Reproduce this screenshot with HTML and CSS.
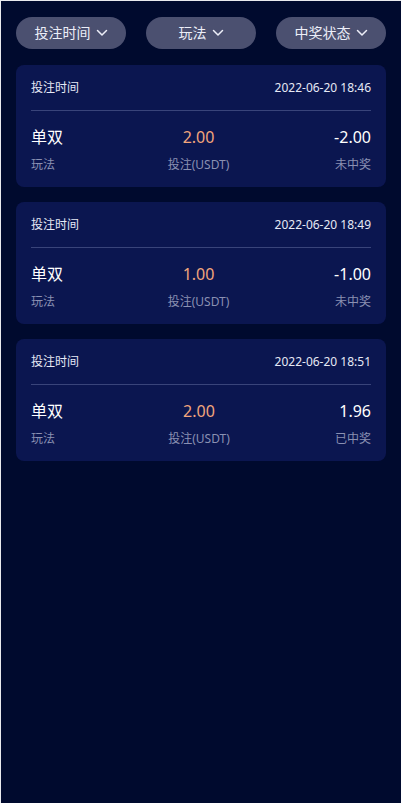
FILE: index.html
```html
<!DOCTYPE html>
<html lang="zh-CN">
<head>
<meta charset="utf-8">
<title>投注记录</title>
<link rel="stylesheet" href="styles.css">
</head>
<body>
<div class="page">
  <div class="filters">
    <button class="filter">投注时间<svg class="chev" viewBox="0 0 12 8"><path d="M1.5 1.5 L6 6 L10.5 1.5"/></svg></button>
    <button class="filter">玩法<svg class="chev" viewBox="0 0 12 8"><path d="M1.5 1.5 L6 6 L10.5 1.5"/></svg></button>
    <button class="filter">中奖状态<svg class="chev" viewBox="0 0 12 8"><path d="M1.5 1.5 L6 6 L10.5 1.5"/></svg></button>
  </div>

  <div class="card">
    <div class="card-head"><span>投注时间</span><span>2022-06-20 18:46</span></div>
    <div class="card-body">
      <div class="col left"><div class="val">单双</div><div class="lbl">玩法</div></div>
      <div class="col mid"><div class="val amount">2.00</div><div class="lbl">投注(USDT)</div></div>
      <div class="col right"><div class="val">-2.00</div><div class="lbl">未中奖</div></div>
    </div>
  </div>

  <div class="card">
    <div class="card-head"><span>投注时间</span><span>2022-06-20 18:49</span></div>
    <div class="card-body">
      <div class="col left"><div class="val">单双</div><div class="lbl">玩法</div></div>
      <div class="col mid"><div class="val amount">1.00</div><div class="lbl">投注(USDT)</div></div>
      <div class="col right"><div class="val">-1.00</div><div class="lbl">未中奖</div></div>
    </div>
  </div>

  <div class="card">
    <div class="card-head"><span>投注时间</span><span>2022-06-20 18:51</span></div>
    <div class="card-body">
      <div class="col left"><div class="val">单双</div><div class="lbl">玩法</div></div>
      <div class="col mid"><div class="val amount">2.00</div><div class="lbl">投注(USDT)</div></div>
      <div class="col right"><div class="val">1.96</div><div class="lbl">已中奖</div></div>
    </div>
  </div>
</div>
</body>
</html>
```

FILE: styles.css
```css
* { box-sizing: border-box; }
html, body {
  margin: 0;
  padding: 0;
  background: #000a2e;
}
body {
  font-family: "Noto Sans", "Noto Sans CJK SC", sans-serif;
  color: #eef0f8;
}
.page {
  min-height: 803px;
  border-top: 1px solid #e9eaee;
  border-left: 1px solid #e9eaee;
  background: #000a2e;
  padding: 16px 15px 20px 15px;
}
.filters {
  display: flex;
  justify-content: space-between;
  margin-bottom: 16px;
}
.filter {
  width: 110px;
  height: 32px;
  border: none;
  border-radius: 16px;
  background: #4b5070;
  color: #eceef8;
  font-family: inherit;
  font-size: 14px;
  line-height: 20px;
  display: flex;
  align-items: center;
  justify-content: center;
  gap: 5px;
  padding: 0;
}
.chev {
  width: 12px;
  height: 8px;
  fill: none;
  stroke: #eceef8;
  stroke-width: 1.5;
  stroke-linecap: round;
  stroke-linejoin: round;
}
.card {
  background: #0b1650;
  border-radius: 8px;
  padding: 15px 15px 14px;
  margin-bottom: 15px;
}
.card-head {
  display: flex;
  justify-content: space-between;
  font-size: 12px;
  line-height: 16px;
  color: #e6e9f5;
  padding-bottom: 14px;
  border-bottom: 1px solid #39447a;
}
.card-body {
  display: flex;
  justify-content: space-between;
  padding-top: 15px;
}
.col { display: flex; flex-direction: column; gap: 9px; }
.left { align-items: flex-start; }
.mid { align-items: center; }
.right { align-items: flex-end; }
.val {
  font-size: 16px;
  line-height: 22px;
  color: #ffffff;
}
.amount { color: #f2a57c; }
.lbl {
  font-size: 12px;
  line-height: 16px;
  color: #8a90b2;
}
```
